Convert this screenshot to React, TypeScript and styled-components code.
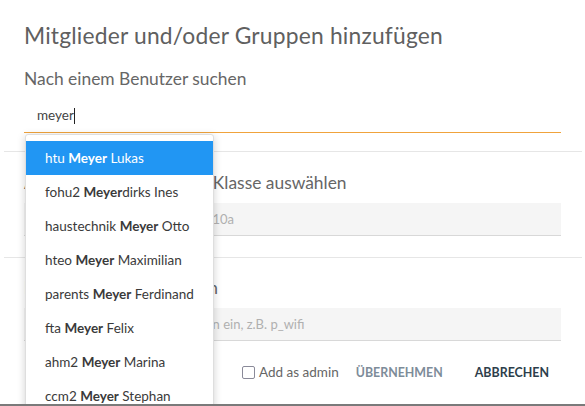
import React from "react";
import styled, { createGlobalStyle } from "styled-components";

const Global = createGlobalStyle`
  html, body { margin: 0; padding: 0; background: #fff; }
  body { font-family: Lato, "Open Sans", sans-serif; overflow: hidden; }
  * { box-sizing: border-box; }
`;

const Dialog = styled.div`
  position: relative;
  width: 585px;
  height: 406px;
  background: #fff;
  border-bottom: 2px solid #7a7a7a;
  overflow: hidden;
`;

const Title = styled.h2`
  margin: 0;
  padding: 22px 24px 0;
  font-size: 22.8px;
  line-height: 26px;
  font-weight: 400;
  color: #606060;
  letter-spacing: 0.2px;
`;

const Section = styled.div`
  padding: 0 24px;
`;

const Label = styled.div<{ $top: number }>`
  margin-top: ${(p) => p.$top}px;
  font-size: 17.4px;
  line-height: 22px;
  color: #666;
  white-space: nowrap;
`;

const SearchField = styled.div`
  margin-top: 12px;
  height: 31px;
  border-bottom: 1.5px solid #f0a33c;
  padding: 5px 0 0 13px;
  font-size: 13.5px;
  color: #444;
  display: flex;
  align-items: flex-start;
`;

const Caret = styled.span`
  display: inline-block;
  width: 1px;
  height: 16px;
  background: #222;
  margin-top: 1px;
`;

const Divider = styled.div<{ $top: number }>`
  margin: ${(p) => p.$top}px 3px 0 4px;
  height: 1px;
  background: #e6e6e6;
`;

const GrayInput = styled.div`
  margin-top: 9px;
  height: 33px;
  background: #f5f5f5;
  border-bottom: 1px solid #d8d8d8;
  padding: 0 16px;
  display: flex;
  align-items: center;
  font-size: 13px;
  color: #b0b0b0;
  white-space: pre;
`;

const Actions = styled.div`
  display: flex;
  justify-content: flex-end;
  align-items: center;
  margin-top: 23px;
  padding-right: 12px;
`;

const CheckLabel = styled.label`
  display: flex;
  align-items: center;
  font-size: 13.5px;
  color: #666;
  margin-right: 17px;
`;

const Box = styled.span`
  width: 13px;
  height: 13px;
  border: 1px solid #8a8a99;
  border-radius: 2px;
  margin-right: 4px;
`;

const TextButton = styled.button<{ $dark?: boolean }>`
  border: none;
  background: none;
  padding: 0;
  font-family: inherit;
  font-weight: 700;
  font-size: 12.4px;
  color: ${(p) => (p.$dark ? "#2d3e4b" : "#7d8c99")};
  margin-left: ${(p) => (p.$dark ? "32px" : "0")};
`;

const Menu = styled.ul`
  position: absolute;
  left: 25px;
  top: 134px;
  width: 189px;
  margin: 0;
  padding: 6px 0 0;
  list-style: none;
  background: #fff;
  border: 1px solid #dedede;
  border-radius: 3px 3px 0 0;
  box-shadow: 0 2px 8px rgba(0, 0, 0, 0.18);
`;

const Item = styled.li<{ $active?: boolean }>`
  height: 34px;
  line-height: 34px;
  padding-left: 19px;
  font-size: 13.5px;
  white-space: pre;
  color: ${(p) => (p.$active ? "#fff" : "#3a3a3a")};
  background: ${(p) => (p.$active ? "#2196f3" : "transparent")};
  b { font-weight: 700; }
`;

const results: [string, string, string][] = [
  ["htu ", "Meyer", " Lukas"],
  ["fohu2 ", "Meyer", "dirks Ines"],
  ["haustechnik ", "Meyer", " Otto"],
  ["hteo ", "Meyer", " Maximilian"],
  ["parents ", "Meyer", " Ferdinand"],
  ["fta ", "Meyer", " Felix"],
  ["ahm2 ", "Meyer", " Marina"],
  ["ccm2 ", "Meyer", " Stephan"],
];

export default function App() {
  return (
    <>
      <Global />
      <Dialog>
        <Title>Mitglieder und/oder Gruppen hinzufügen</Title>
        <Section>
          <Label $top={20}>Nach einem Benutzer suchen</Label>
          <SearchField>
            meyer
            <Caret />
          </SearchField>
        </Section>
        <Divider $top={18} />
        <Section>
          <Label $top={20}>Alle Mitglieder aus einer Klasse auswählen</Label>
          <GrayInput>Klassennamen eintragen, z. B. 10a</GrayInput>
        </Section>
        <Divider $top={21} />
        <Section>
          <Label $top={19}>Nach einer Gruppe filtern</Label>
          <GrayInput>Fügen Sie Ihren Gruppennamen ein, z.B. p_wifi</GrayInput>
          <Actions>
            <CheckLabel>
              <Box />
              Add as admin
            </CheckLabel>
            <TextButton>ÜBERNEHMEN</TextButton>
            <TextButton $dark>ABBRECHEN</TextButton>
          </Actions>
        </Section>
        <Menu>
          {results.map(([a, b, c], i) => (
            <Item key={i} $active={i === 0}>
              {a}
              <b>{b}</b>
              {c}
            </Item>
          ))}
        </Menu>
      </Dialog>
    </>
  );
}
